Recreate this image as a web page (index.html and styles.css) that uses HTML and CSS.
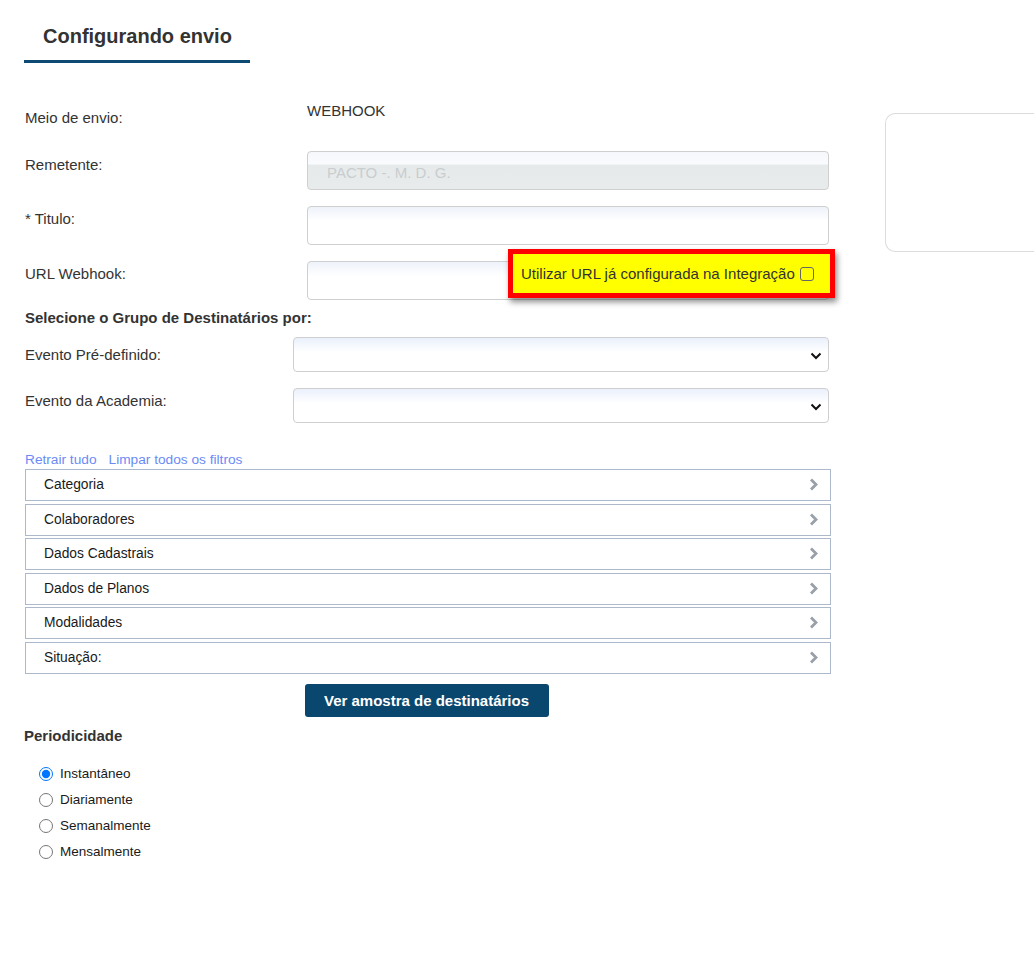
FILE: index.html
```html
<!DOCTYPE html>
<html lang="pt-BR">
<head>
<meta charset="utf-8">
<title>Configurando envio</title>
<link rel="stylesheet" href="styles.css">
</head>
<body>
<div class="page">
  <div class="tabbar">
    <div class="tab">Configurando envio</div>
  </div>

  <div class="content">
    <div class="form">
      <div class="row row-meio">
        <div class="label label-meio">Meio de envio:</div>
        <div class="value">WEBHOOK</div>
      </div>
      <div class="row row-rem">
        <div class="label label-rem">Remetente:</div>
        <div class="input input-disabled"><span class="placeholder">PACTO -. M. D. G.</span></div>
      </div>
      <div class="row row-tit">
        <div class="label">* Titulo:</div>
        <div class="input"></div>
      </div>
      <div class="row row-url">
        <div class="label">URL Webhook:</div>
        <div class="input"></div>
        <div class="highlight">
          <span>Utilizar URL já configurada na Integração</span>
          <span class="checkbox"></span>
        </div>
      </div>

      <div class="section-title">Selecione o Grupo de Destinatários por:</div>

      <div class="srow srow-1">
        <div class="slabel">Evento Pré-definido:</div>
        <div class="select">
          <svg class="chev-down" width="12" height="8" viewBox="0 0 12 8"><polyline points="1.5,1.5 6,6 10.5,1.5" fill="none" stroke="#111" stroke-width="2"/></svg>
        </div>
      </div>
      <div class="srow srow-2">
        <div class="slabel slabel-2">Evento da Academia:</div>
        <div class="select">
          <svg class="chev-down" width="12" height="8" viewBox="0 0 12 8"><polyline points="1.5,1.5 6,6 10.5,1.5" fill="none" stroke="#111" stroke-width="2"/></svg>
        </div>
      </div>

      <div class="links">
        <a class="link">Retrair tudo</a>
        <a class="link">Limpar todos os filtros</a>
      </div>

      <div class="accordion">
        <div class="acc-item"><span>Categoria</span><svg class="chev" width="9" height="13" viewBox="0 0 9 13"><polyline points="2,1.5 7,6.5 2,11.5" fill="none" stroke="#9aa0a8" stroke-width="2.8"/></svg></div>
        <div class="acc-item"><span>Colaboradores</span><svg class="chev" width="9" height="13" viewBox="0 0 9 13"><polyline points="2,1.5 7,6.5 2,11.5" fill="none" stroke="#9aa0a8" stroke-width="2.8"/></svg></div>
        <div class="acc-item"><span>Dados Cadastrais</span><svg class="chev" width="9" height="13" viewBox="0 0 9 13"><polyline points="2,1.5 7,6.5 2,11.5" fill="none" stroke="#9aa0a8" stroke-width="2.8"/></svg></div>
        <div class="acc-item"><span>Dados de Planos</span><svg class="chev" width="9" height="13" viewBox="0 0 9 13"><polyline points="2,1.5 7,6.5 2,11.5" fill="none" stroke="#9aa0a8" stroke-width="2.8"/></svg></div>
        <div class="acc-item"><span>Modalidades</span><svg class="chev" width="9" height="13" viewBox="0 0 9 13"><polyline points="2,1.5 7,6.5 2,11.5" fill="none" stroke="#9aa0a8" stroke-width="2.8"/></svg></div>
        <div class="acc-item"><span>Situação:</span><svg class="chev" width="9" height="13" viewBox="0 0 9 13"><polyline points="2,1.5 7,6.5 2,11.5" fill="none" stroke="#9aa0a8" stroke-width="2.8"/></svg></div>
      </div>

      <div class="btn-wrap">
        <button class="btn">Ver amostra de destinatários</button>
      </div>

      <div class="period-title">Periodicidade</div>
      <div class="radios">
        <label class="radio"><input type="radio" name="p" checked><span>Instantâneo</span></label>
        <label class="radio"><input type="radio" name="p"><span>Diariamente</span></label>
        <label class="radio"><input type="radio" name="p"><span>Semanalmente</span></label>
        <label class="radio"><input type="radio" name="p"><span>Mensalmente</span></label>
      </div>
    </div>

    <div class="aside"></div>
  </div>
</div>
</body>
</html>
```

FILE: styles.css
```css
html, body {
  margin: 0;
  padding: 0;
  background: #fff;
  overflow: hidden;
}
body {
  font-family: "Liberation Sans", Arial, sans-serif;
  font-size: 15px;
  color: #333;
}
.page {
  width: 1034px;
  height: 969px;
}
.tabbar {
  padding-left: 24px;
}
.tab {
  display: inline-block;
  width: 207px;
  padding: 24px 0 12px 19px;
  font-size: 20px;
  line-height: 24px;
  font-weight: bold;
  color: #333;
  border-bottom: 3px solid #0c4a73;
}
.content {
  display: flex;
  align-items: flex-start;
}
.form {
  width: 806px;
  margin-left: 25px;
  display: flex;
  flex-direction: column;
}
.row {
  display: flex;
  align-items: flex-start;
  position: relative;
}
.label {
  width: 282px;
  flex: none;
  line-height: 20px;
  padding-top: 3px;
}
.row-meio { margin-top: 38px; }
.label-meio { padding-top: 7px; }
.label-rem { padding-top: 4px; }
.value { line-height: 20px; }
.row-rem { margin-top: 23px; }
.row-tit { margin-top: 16px; }
.row-url { margin-top: 16px; }
.input {
  width: 520px;
  height: 37px;
  border: 1px solid #cfcfcf;
  border-radius: 4px;
  background: linear-gradient(to bottom, #eef2fa 0px, #fff 14px, #fff 100%);
  box-sizing: content-box;
}
.input-disabled {
  background: linear-gradient(to bottom, #f5f7fc 0px, #fafbfd 12px, #e7eaea 13px, #e8ebeb 100%);
  display: flex;
  align-items: center;
}
.placeholder {
  color: #c8cdd0;
  padding-left: 19px;
  padding-top: 3px;
}
.highlight {
  position: absolute;
  left: 483px;
  top: -12px;
  width: 309px;
  height: 39px;
  border: 5px solid #ff0000;
  background: #ffff00;
  box-shadow: 2px 4px 6px rgba(0, 0, 0, 0.45);
  display: flex;
  align-items: center;
  padding-left: 8px;
  box-sizing: content-box;
  color: #333;
  font-size: 15px;
}
.checkbox {
  display: inline-block;
  width: 12px;
  height: 12px;
  border: 1px solid #666;
  border-radius: 3px;
  margin-left: 5px;
}
.section-title {
  margin-top: 9px;
  font-weight: bold;
  line-height: 18px;
}
.srow {
  display: flex;
  align-items: flex-start;
}
.srow-1 { margin-top: 10px; }
.srow-2 { margin-top: 16px; }
.slabel {
  width: 268px;
  flex: none;
  line-height: 20px;
  padding-top: 8px;
}
.slabel-2 { padding-top: 3px; }
.select {
  width: 536px;
  height: 35px;
  box-sizing: border-box;
  border: 1px solid #cfcfcf;
  border-radius: 4px;
  background: linear-gradient(to bottom, #eaf0fb 0px, #fff 14px, #fff 100%);
  display: flex;
  align-items: center;
  justify-content: flex-end;
  padding-right: 6px;
}
.chev-down { margin-top: 2px; }
.links {
  margin-top: 28px;
  display: flex;
  gap: 12px;
  line-height: 18px;
  font-size: 13.7px;
}
.link {
  color: #6a8bf6;
  cursor: pointer;
}
.accordion {
  margin-top: 0;
  display: flex;
  flex-direction: column;
  gap: 2.5px;
}
.acc-item {
  height: 30px;
  border: 1px solid #abb9cb;
  display: flex;
  align-items: center;
  justify-content: space-between;
  padding: 0 12px 0 18px;
  color: #1a1a1a;
  font-size: 13.8px;
}
.acc-item span { margin-top: -1px; }
.acc-item .chev { margin-top: -1px; }
.btn-wrap {
  display: flex;
  justify-content: center;
  margin-top: 10px;
}
.btn {
  width: 244px;
  height: 33px;
  background: #0a476f;
  color: #fff;
  border: none;
  border-radius: 3px;
  font-family: "Liberation Sans", Arial, sans-serif;
  font-size: 15px;
  font-weight: bold;
  padding: 0;
  margin-left: -3px;
}
.period-title {
  margin-top: 10px;
  margin-left: -1px;
  font-weight: bold;
  line-height: 18px;
  color: #333;
}
.radios {
  margin-top: 16px;
  padding-left: 14px;
  display: flex;
  flex-direction: column;
}
.radio {
  display: flex;
  align-items: center;
  height: 26px;
  color: #1a1a1a;
  font-size: 13.5px;
}
.radio input {
  width: 14px;
  height: 14px;
  margin: 0 7px 0 0;
  accent-color: #0075ff;
}
.aside {
  flex: 1;
  margin-left: 54px;
  margin-top: 50px;
  height: 137px;
  border: 1px solid #dcdcdc;
  border-right: none;
  border-radius: 10px 0 0 10px;
}
```
